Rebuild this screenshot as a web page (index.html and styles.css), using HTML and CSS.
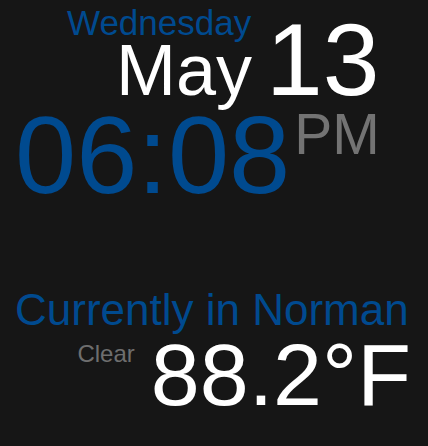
FILE: index.html
```html
<!DOCTYPE html>
<html>
<head lang="en">
    <meta charset="UTF-8">
    <title>Clock</title>
    <link rel="stylesheet" href="styles.css">
</head>
<body>
    <div id="container">
        <div class="date">
            <div class="day">Wednesday</div>
            <div class="date-row">
                <span class="month">May</span>
                <span class="mday">13</span>
            </div>
        </div>
        <div class="time">
            <span class="clock">06:08</span>
            <span class="ampm">PM</span>
        </div>
        <div class="weather">
            <div class="place">Currently in Norman</div>
            <div class="temp-row">
                <span class="cond">Clear</span>
                <span class="temp">88.2°F</span>
            </div>
        </div>
    </div>
</body>
</html>
```

FILE: styles.css
```css
*{
    padding: 0;
    margin: 0;
}
html, body{
    background: #161616;
}
body{
    width: 428px;
    height: 446px;
    overflow: hidden;
    font-family: "Liberation Sans", Helvetica, Arial, sans-serif;
}
#container{
    width: 428px;
}
.date{
    padding-top: 6px;
}
.day{
    padding-left: 67px;
    font-size: 35px;
    line-height: 34px;
    color: #004a8f;
}
.date-row{
    display: flex;
    align-items: baseline;
    padding-left: 116px;
    color: #fff;
}
.month{
    font-size: 72px;
    line-height: 40px;
}
.mday{
    margin-left: 14px;
    font-size: 102px;
    line-height: 40px;
}
.time{
    display: flex;
    align-items: flex-start;
    padding-left: 15px;
}
.clock{
    font-size: 110px;
    line-height: 129px;
    color: #004a8f;
}
.ampm{
    margin-left: 4px;
    font-size: 57px;
    line-height: 89px;
    color: #737373;
}
.weather{
    margin-top: 70px;
}
.place{
    padding-left: 15px;
    font-size: 44px;
    line-height: 42px;
    color: #004a8f;
}
.temp-row{
    display: flex;
    align-items: flex-start;
    justify-content: flex-end;
    padding-right: 17px;
}
.cond{
    margin-top: 11px;
    font-size: 24px;
    line-height: 24px;
    color: #6e6e6e;
}
.temp{
    margin-left: 16px;
    font-size: 88px;
    line-height: 88px;
    color: #fff;
}
```
